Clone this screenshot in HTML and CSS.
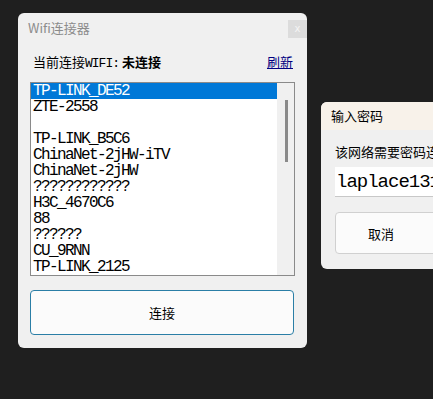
FILE: index.html
```html
<!DOCTYPE html>
<html lang="zh-CN">
<head>
    <meta charset="UTF-8">
    <title>Wifi连接器</title>
    <link rel="stylesheet" href="styles.css">
</head>
<body>
    <div class="window main-window">
        <div class="titlebar">
            <span class="title">Wifi连接器</span>
            <span class="close">x</span>
        </div>
        <div class="status-row">
            <span class="label">当前连接<span class="mono">WIFI:</span></span>
            <span class="state">未连接</span>
            <a class="refresh" href="#">刷新</a>
        </div>
        <div class="listbox">
            <ul class="items">
                <li class="selected">TP-LINK_DE52</li>
                <li>ZTE-2558</li>
                <li>&nbsp;</li>
                <li>TP-LINK_B5C6</li>
                <li>ChinaNet-2jHW-iTV</li>
                <li>ChinaNet-2jHW</li>
                <li>????????????</li>
                <li>H3C_4670C6</li>
                <li>88</li>
                <li>??????</li>
                <li>CU_9RNN</li>
                <li>TP-LINK_2125</li>
            </ul>
            <div class="scrollbar"><div class="thumb"></div></div>
        </div>
        <button class="connect">连接</button>
    </div>

    <div class="window pwd-window">
        <div class="pwd-title">输入密码</div>
        <div class="pwd-body">
            <div class="pwd-hint">该网络需要密码连接</div>
            <div class="pwd-input">laplace1314</div>
            <button class="cancel">取消</button>
        </div>
    </div>
</body>
</html>
```

FILE: styles.css
```css
html, body {
    margin: 0;
    height: 100%;
}
body {
    background: #1f1f1f;
    font-family: "Noto Sans CJK SC", "Noto Sans", sans-serif;
    font-size: 13px;
    color: #000;
    position: relative;
    overflow: hidden;
}
.window {
    position: absolute;
    background: #f0f0f0;
    border-radius: 6px;
    box-sizing: border-box;
}
.main-window {
    left: 18px;
    top: 13px;
    width: 289px;
    height: 335px;
    padding: 0 12px;
}
.titlebar {
    display: flex;
    justify-content: space-between;
    align-items: flex-start;
    height: 36px;
    margin-right: -12px;
    margin-left: -2px;
}
.title {
    color: #8c8c8c;
    padding-top: 5px;
    font-size: 13px;
}
.close {
    margin-top: 7px;
    width: 19px;
    height: 18px;
    background: #dcdcdc;
    color: #f4f4f4;
    font-size: 10px;
    line-height: 17px;
    text-align: center;
    font-family: "DejaVu Sans", sans-serif;
}
.status-row {
    display: flex;
    align-items: center;
    height: 24px;
    padding: 0 2px 0 3px;
}
.label {
    font-size: 13px;
    width: 89px;
    white-space: nowrap;
}
.mono {
    font-family: "Liberation Mono", "Courier New", monospace;
    font-size: 13px;
    letter-spacing: -1px;
}
.state {
    font-weight: bold;
    font-size: 13px;
    flex: 1;
}
.refresh {
    color: #000080;
    text-decoration: underline;
    font-size: 13px;
}
.listbox {
    margin-top: 9px;
    height: 194px;
    border: 1px solid #8a8a8a;
    background: #fff;
    display: flex;
    box-sizing: border-box;
    width: 265px;
}
.items {
    list-style: none;
    margin: 0;
    padding: 0;
    flex: 1;
    overflow: hidden;
}
.items li {
    height: 16px;
    line-height: 16px;
    padding-left: 2px;
    font-family: "Liberation Mono", "Courier New", monospace;
    font-size: 16px;
    letter-spacing: -1.6px;
    white-space: nowrap;
    overflow: hidden;
}
.items li.selected {
    background: #0078d7;
    color: #fff;
}
.scrollbar {
    width: 17px;
    background: #f0f0f0;
    position: relative;
}
.thumb {
    position: absolute;
    left: 8px;
    top: 17px;
    width: 3px;
    height: 62px;
    background: #8a8a8a;
}
.connect {
    display: block;
    margin-top: 14px;
    width: 264px;
    height: 45px;
    border: 1px solid #2a7ea6;
    border-radius: 4px;
    background: #fbfbfb;
    font-family: "Noto Sans CJK SC", sans-serif;
    font-size: 13px;
    color: #000;
}
.pwd-window {
    left: 321px;
    top: 102px;
    width: 140px;
    height: 167px;
    overflow: hidden;
}
.pwd-title {
    background: #f8f2ea;
    height: 28px;
    line-height: 27px;
    padding-left: 10px;
    font-size: 13px;
}
.pwd-body {
    padding: 12px 0 0 14px;
}
.pwd-hint {
    font-size: 13px;
    line-height: 20px;
    white-space: nowrap;
}
.pwd-input {
    margin-top: 5px;
    height: 30px;
    background: #fff;
    border-bottom: 1px solid #c8c8c8;
    box-sizing: border-box;
    padding-left: 1px;
    line-height: 30px;
    font-family: "Liberation Mono", "Courier New", monospace;
    font-size: 19px;
    letter-spacing: -1px;
    white-space: nowrap;
}
.cancel {
    display: block;
    margin-top: 15px;
    width: 120px;
    height: 42px;
    border: 1px solid #d0d0d0;
    border-radius: 4px;
    background: #fbfbfb;
    font-family: "Noto Sans CJK SC", sans-serif;
    font-size: 13px;
    text-align: left;
    padding-left: 32px;
}
```
